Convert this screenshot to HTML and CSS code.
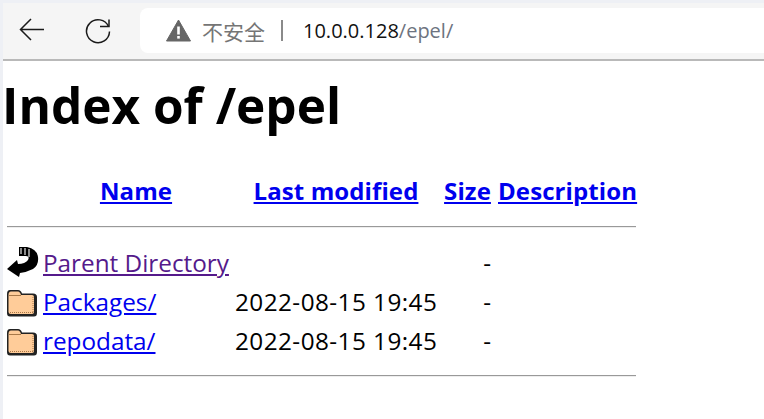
FILE: index.html
```html
<!DOCTYPE html>
<html lang="zh">
<head>
    <meta charset="UTF-8">
    <title>Index of /epel</title>
    <link rel="stylesheet" href="styles.css">
</head>
<body>
    <div class="toolbar">
        <svg class="nav-icon back" width="28" height="28" viewBox="0 0 28 28">
            <path d="M25 12.5H1.5M12 2L1.5 12.5 12 23" fill="none" stroke="#1a1a1a" stroke-width="1.5"/>
        </svg>
        <svg class="nav-icon reload" width="28" height="28" viewBox="0 0 28 28">
            <path d="M23.5 9.5A11.5 11.5 0 1 0 24.5 14.5" fill="none" stroke="#1a1a1a" stroke-width="1.5"/>
            <path d="M24 2.5v7h-9" fill="none" stroke="#1a1a1a" stroke-width="1.5"/>
        </svg>
        <div class="address">
            <svg class="warn" width="25" height="23" viewBox="0 0 25 23">
                <path d="M12.5 1L24.5 22H.5z" fill="#666" stroke="#666" stroke-linejoin="round"/>
                <rect x="11.2" y="7.5" width="2.6" height="8" fill="#fff"/>
                <rect x="11.2" y="17" width="2.6" height="2.6" fill="#fff"/>
            </svg>
            <span class="insecure">不安全</span>
            <span class="divider"></span>
            <span class="host">10.0.0.128</span><span class="path">/epel/</span>
        </div>
    </div>

    <div class="page">
        <h1>Index of /epel</h1>
        <table>
            <tr class="head">
                <th class="icon-col"></th>
                <th class="name-col"><a href="#">Name</a></th>
                <th class="date-col"><a href="#">Last modified</a></th>
                <th class="size-col"><a href="#">Size</a></th>
                <th class="desc-col"><a href="#">Description</a></th>
            </tr>
            <tr class="rule rule-top"><td colspan="5"><hr></td></tr>
            <tr>
                <td class="icon-cell">
                    <svg width="32" height="32" viewBox="0 0 32 32">
                        <path d="M12 0L20 0Q30 2 31 10Q32 18 26 22Q20 25 13 26L12 30L0 22L10 13L11 17Q18 17 21 13Q23 9 19 9L12 9z" fill="#000"/>
                        <path d="M13 1h2v6h-2zM17 1h2v7h-2zM21 2h2v8h-2z" fill="#8a8a8a"/>
                    </svg>
                </td>
                <td><a class="visited" href="#">Parent Directory</a></td>
                <td></td>
                <td class="size">-</td>
                <td></td>
            </tr>
            <tr>
                <td class="icon-cell">
                    <svg width="32" height="32" viewBox="1 0 32 32">
                        <path d="M1 8Q1 4 4 4H12Q15 4 16 7.5H27Q31 7.5 31 11V27Q31 30.5 28 30.5H4Q1 30.5 1 27z" fill="#222"/>
                        <path d="M2.5 9Q2.5 5.5 5 5.5H12Q14 5.5 15 9H26Q28 9 28 11V26Q28 28 26 28H5Q2.5 28 2.5 26z" fill="#fc9"/>
                        <path d="M3 9.5H15" stroke="#a87848" fill="none"/>
                        <path d="M4 26.5H27M27 11V26" stroke="#a87848" stroke-dasharray="1 1" fill="none"/>
                    </svg>
                </td>
                <td><a href="#">Packages/</a></td>
                <td class="date">2022-08-15 19:45</td>
                <td class="size">-</td>
                <td></td>
            </tr>
            <tr>
                <td class="icon-cell">
                    <svg width="32" height="32" viewBox="1 0 32 32">
                        <path d="M1 8Q1 4 4 4H12Q15 4 16 7.5H27Q31 7.5 31 11V27Q31 30.5 28 30.5H4Q1 30.5 1 27z" fill="#222"/>
                        <path d="M2.5 9Q2.5 5.5 5 5.5H12Q14 5.5 15 9H26Q28 9 28 11V26Q28 28 26 28H5Q2.5 28 2.5 26z" fill="#fc9"/>
                        <path d="M3 9.5H15" stroke="#a87848" fill="none"/>
                        <path d="M4 26.5H27M27 11V26" stroke="#a87848" stroke-dasharray="1 1" fill="none"/>
                    </svg>
                </td>
                <td><a href="#">repodata/</a></td>
                <td class="date">2022-08-15 19:45</td>
                <td class="size">-</td>
                <td></td>
            </tr>
            <tr class="rule rule-bottom"><td colspan="5"><hr></td></tr>
        </table>
    </div>
</body>
</html>
```

FILE: styles.css
```css
html, body {
    margin: 0;
    height: 100%;
    overflow: hidden;
}
body {
    background: #fff;
    border-left: 3px solid #eef0f5;
    box-sizing: border-box;
    font-family: "Open Sans", "Noto Sans", "Noto Sans CJK SC", sans-serif;
    color: #000;
}

/* toolbar */
.toolbar {
    display: flex;
    align-items: center;
    box-sizing: border-box;
    height: 61px;
    padding-top: 5px;
    padding-bottom: 6px;
    background: #f5f5f5;
    border-top: 3px solid #eef0f5;
    border-bottom: 2px solid #b9b9b9;
}
.nav-icon {
    flex: none;
}
.back {
    margin-left: 16px;
}
.reload {
    margin-left: 38px;
}
.address {
    flex: 1;
    display: flex;
    align-items: center;
    height: 45px;
    margin-left: 27px;
    padding-left: 26px;
    background: #fff;
    border-radius: 8px 0 0 8px;
    font-size: 20px;
}
.warn {
    flex: none;
}
.insecure {
    margin-left: 11px;
    color: #757575;
    font-size: 21px;
}
.divider {
    width: 2px;
    height: 21px;
    margin: 0 20px 0 16px;
    background: #8a8a8a;
}
.host {
    color: #111;
}
.path {
    color: #6d7380;
}

/* listing */
h1 {
    margin: 12px 0 0 -1px;
    font-size: 49.5px;
    line-height: 64px;
    font-weight: 700;
}
table {
    margin-top: 34px;
    margin-left: 4px;
    border-collapse: collapse;
    font-size: 24.3px;
    table-layout: fixed;
    width: 629px;
}
th, td {
    padding: 0;
    white-space: nowrap;
}
th {
    height: 38px;
    font-size: 24px;
    letter-spacing: .1px;
}
td {
    height: 39px;
}
.icon-col {
    width: 36px;
}
.name-col {
    width: 186px;
}
.date-col {
    width: 214px;
}
.size-col {
    width: 52px;
    padding-right: 3px;
    box-sizing: border-box;
}
.desc-col {
    padding-left: 3px;
}
.rule td {
    vertical-align: top;
}
.rule-top td {
    height: 34px;
    padding-top: 17px;
    box-sizing: border-box;
}
.rule-bottom td {
    height: 30px;
    padding-top: 15px;
    box-sizing: border-box;
}
hr {
    margin: 0;
    border: 0;
    border-top: 1px solid #999;
    border-bottom: 1px solid #eee;
}
a {
    color: #00e;
}
a.visited {
    color: #551a8b;
}
.icon-cell {
    line-height: 0;
    vertical-align: middle;
}
.date {
    padding-left: 6px;
    letter-spacing: .45px;
}
.size {
    text-align: right;
    padding-right: 4px;
}
```
